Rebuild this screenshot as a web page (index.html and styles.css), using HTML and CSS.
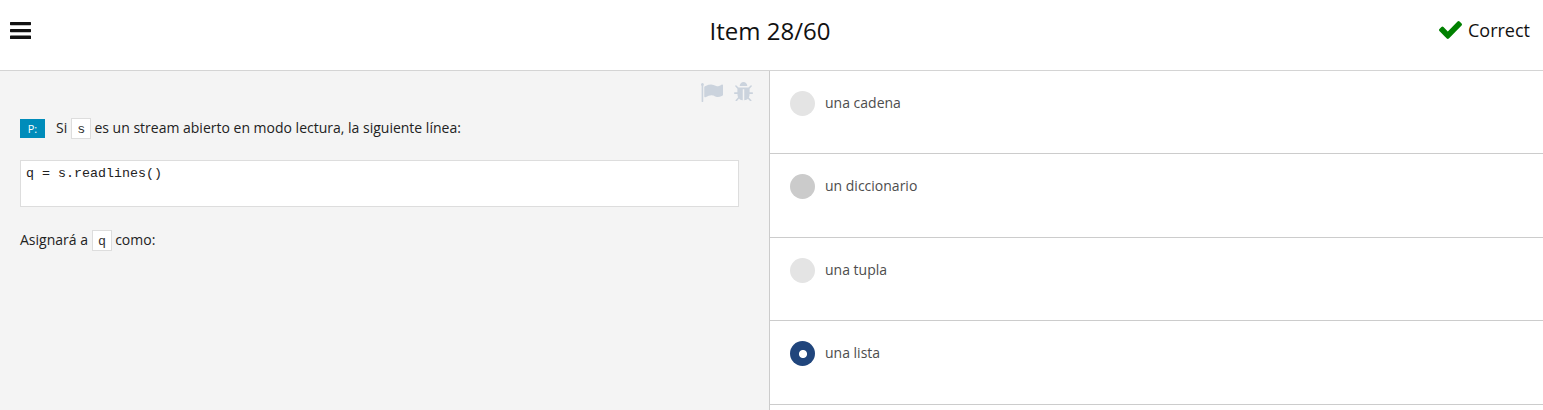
FILE: index.html
```html
<!DOCTYPE html>
<html lang="es">
<head>
<meta charset="utf-8">
<title>Item 28/60</title>
<link rel="stylesheet" href="styles.css">
</head>
<body>
<header class="header">
  <svg class="menu" viewBox="0 0 21 17"><path d="M.6 0h19.800q.6 0 .6.600v2q0 .6-.6.600H.6q-.6 0-.6-.600v-2Q0 0 .6 0zM.6 7h19.800q.6 0 .6.600v2q0 .6-.6.600H.6q-.6 0-.6-.600v-2Q0 7 .6 7zM.6 13.600h19.800q.6 0 .6.600v2.200q0 .6-.6.600H.6q-.6 0-.6-.600v-2.200q0-.6.6-.6z"/></svg>
  <h1 class="title">Item 28/60</h1>
  <div class="result">
    <svg class="check" viewBox="121 334 1550 1188" preserveAspectRatio="none"><path d="M1671 566q0 40-28 68l-724 724-136 136q-28 28-68 28t-68-28l-136-136-362-362q-28-28-28-68t28-68l136-136q28-28 68-28t68 28l294 295 656-657q28-28 68-28t68 28l136 136q28 28 28 68z"/></svg>
    <span>Correct</span>
  </div>
</header>
<main class="main">
  <section class="question">
    <div class="tools">
      <svg class="flag" viewBox="64 128 1728 1536" preserveAspectRatio="none"><path d="M288 256q0 72-48 110v1266q0 32-32 32h-64q-32 0-32-32v-1266q-48-38-48-110 0-128 112-128t112 128zM1792 320v763q0 25-12.500 38.500t-39.500 27.500q-215 116-369 116-61 0-123.500-22t-108.500-48-115.500-48-142.500-22q-192 0-464 146-17 9-33 9-26 0-45-19t-19-45v-742q0-32 31-55 21-14 79-43 236-120 421-120 107 0 200 29t219 88q38 19 88 19 54 0 117.500-21t110-47 88-47 54.500-21q26 0 45 19t19 45z"/></svg>
      <svg class="bug" viewBox="96 64 1600 1536" preserveAspectRatio="none"><path d="M1696 960q0 26-19 45t-45 19h-224q0 171-67 290l208 209q19 19 19 45t-19 45q-18 19-45 19t-45-19l-198-197q-5 5-15 13t-42 28.500-65 36.500-82 29-97 13v-896h-128v896q-51 0-101.500-13.500t-87-33-66-39-43.500-32.500l-15-14-183 207q-20 21-48 21-24 0-43-16-19-18-20.500-44.500t15.500-46.500l202-227q-58-114-58-274h-224q-26 0-45-19t-19-45 19-45 45-19h224v-294l-173-173q-19-19-19-45t19-45 45-19 45 19l173 173h844l173-173q19-19 45-19t45 19 19 45-19 45l-173 173v294h224q26 0 45 19t19 45zm-480-576h-640q0-133 93.500-226.500t226.500-93.500 226.500 93.500 93.500 226.500z"/></svg>
    </div>
    <div class="line"><span class="badge">P:</span><span>Si</span><code class="code">s</code><span>es un stream abierto en modo lectura, la siguiente línea:</span></div>
    <pre class="block">q = s.readlines()</pre>
    <div class="line"><span>Asignará a</span><code class="code">q</code><span>como:</span></div>
  </section>
  <section class="answers">
    <div class="answer"><span class="radio"></span><span>una cadena</span></div>
    <div class="answer"><span class="radio hover"></span><span>un diccionario</span></div>
    <div class="answer"><span class="radio"></span><span>una tupla</span></div>
    <div class="answer"><span class="radio selected"></span><span>una lista</span></div>
  </section>
</main>
</body>
</html>
```
FILE: styles.css
```css
* { box-sizing: border-box; }
body {
  margin: 0;
  height: 410px;
  overflow: hidden;
  background: #fff;
  color: #222;
  font-family: "Open Sans", "Noto Sans", sans-serif;
  font-size: 14px;
}
.header {
  display: grid;
  grid-template-columns: 1fr auto 1fr;
  height: 71px;
  padding: 0 13px 0 10px;
  border-bottom: 1px solid #d4d4d4;
  color: #111;
}
.menu { width: 21px; height: 17px; margin-top: 22px; fill: #111; }
.title {
  margin: 0;
  padding-top: 14px;
  font-size: 24px;
  line-height: 33px;
  font-weight: 400;
}
.result {
  display: flex;
  justify-content: flex-end;
  align-items: flex-start;
  gap: 6px;
  padding-top: 18px;
  font-size: 18px;
  line-height: 25px;
}
.check { width: 23px; height: 18px; margin-top: 3px; fill: #008000; }
.main { display: flex; height: 339px; }
.question {
  width: 770px;
  padding: 11px 16px 0 20px;
  border-right: 1px solid #ccc;
  background: #f4f4f4;
}
.tools {
  display: flex;
  justify-content: flex-end;
  gap: 11px;
  height: 20px;
  fill: #cbd3dd;
}
.flag { width: 22px; height: 19px; margin-top: 1px; }
.bug { width: 19px; height: 19px; }
.line { display: flex; align-items: center; height: 22px; margin-top: 15px; line-height: 20px; }
.badge {
  width: 25px;
  height: 19px;
  margin-right: 11px;
  background: #008cba;
  color: #fff;
  font-size: 11px;
  line-height: 19px;
  text-align: center;
}
.code {
  width: 20px;
  height: 21px;
  margin: 1px 3.200px 0 4px;
  border: 1px solid #ddd;
  background: #fff;
  color: #333;
  font: 13.33px/21px "Courier New", "Liberation Mono", monospace;
  text-align: center;
}
.block {
  width: 719px;
  height: 47px;
  margin: 21px 0 22px;
  padding: 5px;
  border: 1px solid #ddd;
  background: #fff;
  color: #222;
  font: 13.33px/15px "Courier New", "Liberation Mono", monospace;
}
.answers { flex: 1; color: #4d4d4d; }
.answer {
  display: flex;
  gap: 10px;
  height: 83.4px;
  padding: 20px 20px 0;
  border-bottom: 1px solid #ccc;
  line-height: 24px;
}
.radio { width: 25px; height: 25px; border-radius: 50%; background: #e4e4e4; }
.hover { background: #cbcbcb; }
.selected { background: radial-gradient(circle at 13px 13px, #fff 3.600px, #20457c 4.500px); }
```
